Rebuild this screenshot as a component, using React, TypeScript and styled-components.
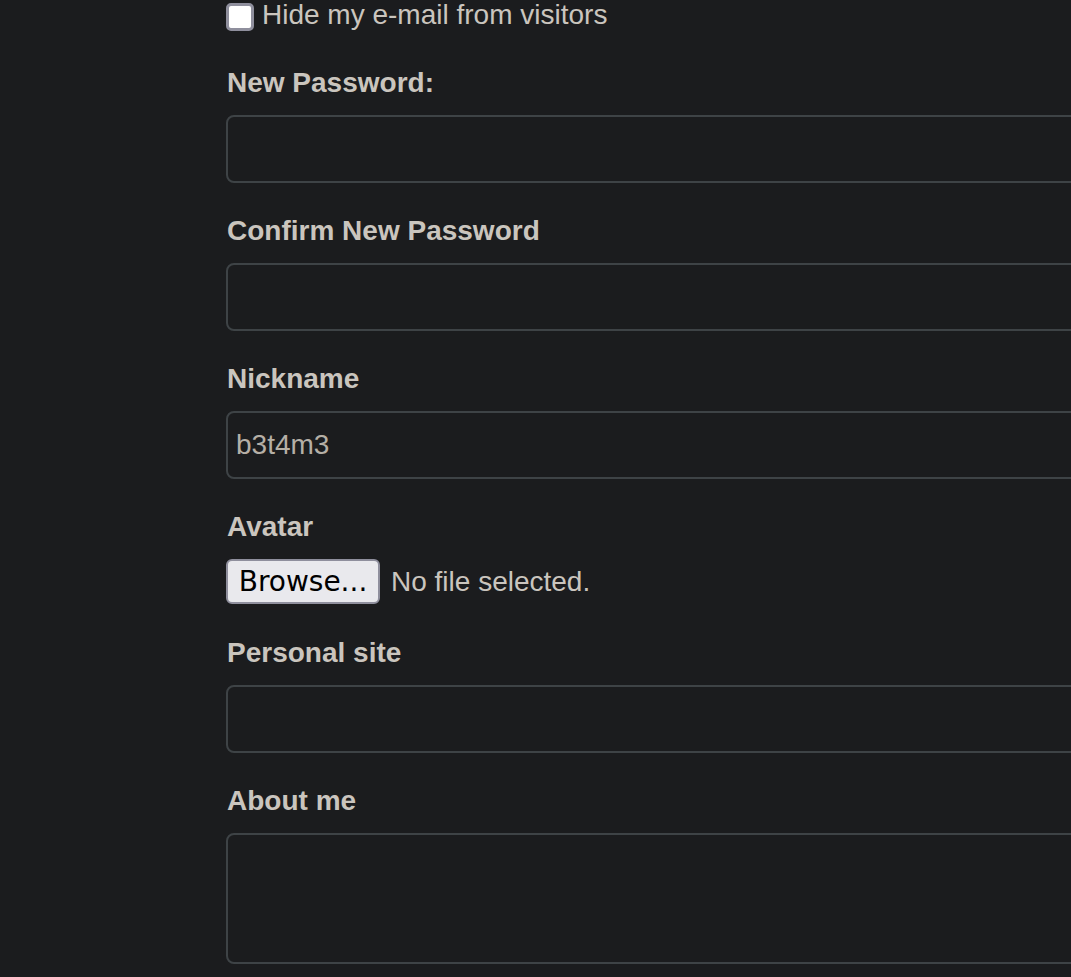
import React from "react";
import styled, { createGlobalStyle } from "styled-components";

const Global = createGlobalStyle`
  html, body { margin: 0; padding: 0; background: #1b1c1e; }
  body { font-family: "Liberation Sans", Arial, sans-serif; color: #cac5be; overflow: hidden; }
`;

const Page = styled.div`
  width: 1071px;
  height: 977px;
  overflow: hidden;
  padding-left: 226px;
  box-sizing: border-box;
`;

const Form = styled.form`
  display: flex;
  flex-direction: column;
  width: 1000px;
`;

const CheckRow = styled.label`
  display: flex;
  align-items: flex-start;
  gap: 8px;
  font-size: 28px;
  height: 37px;
  margin-bottom: 26px;
`;

const Check = styled.span`
  width: 28px;
  height: 28px;
  box-sizing: border-box;
  background: #ffffff;
  border: 3px solid #8f8f9d;
  border-radius: 5px;
  margin-top: 3px;
  flex: none;
`;

const CheckText = styled.span`
  line-height: 30px;
`;

const Field = styled.div`
  display: flex;
  flex-direction: column;
  margin-bottom: 28px;
`;

const Label = styled.label`
  font-size: 28px;
  font-weight: bold;
  line-height: 40px;
  height: 40px;
  margin-bottom: 12px;
  padding-left: 1px;
`;

const TextInput = styled.input`
  height: 68px;
  box-sizing: border-box;
  width: 100%;
  background: #1b1c1e;
  border: 2px solid #3e4346;
  border-radius: 8px;
  padding: 0 8px;
  font-family: "Liberation Sans", Arial, sans-serif;
  font-size: 28px;
  color: #b5afa6;
  outline: none;
`;

const TextArea = styled.textarea`
  height: 131px;
  box-sizing: border-box;
  width: 100%;
  background: #1b1c1e;
  border: 2px solid #3e4346;
  border-radius: 8px;
  padding: 8px;
  resize: none;
  outline: none;
`;

const FileRow = styled.div`
  display: flex;
  align-items: flex-start;
  gap: 11px;
  height: 46px;
`;

const BrowseButton = styled.button`
  height: 45px;
  width: 154px;
  box-sizing: border-box;
  background: #e9e9ed;
  border: 2px solid #8f8f9d;
  border-radius: 6px;
  font-family: "DejaVu Sans", sans-serif;
  font-size: 28px;
  line-height: 1;
  color: #000;
  padding: 0;
`;

const FileText = styled.span`
  font-size: 28px;
  line-height: 45px;
  color: #cac5be;
`;

export default function App() {
  return (
    <Page>
      <Global />
      <Form onSubmit={(e) => e.preventDefault()}>
        <CheckRow>
          <Check />
          <CheckText>Hide my e-mail from visitors</CheckText>
        </CheckRow>
        <Field>
          <Label>New Password:</Label>
          <TextInput type="password" />
        </Field>
        <Field>
          <Label>Confirm New Password</Label>
          <TextInput type="password" />
        </Field>
        <Field>
          <Label>Nickname</Label>
          <TextInput type="text" defaultValue="b3t4m3" />
        </Field>
        <Field>
          <Label>Avatar</Label>
          <FileRow>
            <BrowseButton type="button">Browse...</BrowseButton>
            <FileText>No file selected.</FileText>
          </FileRow>
        </Field>
        <Field>
          <Label>Personal site</Label>
          <TextInput type="text" />
        </Field>
        <Field>
          <Label>About me</Label>
          <TextArea />
        </Field>
      </Form>
    </Page>
  );
}
